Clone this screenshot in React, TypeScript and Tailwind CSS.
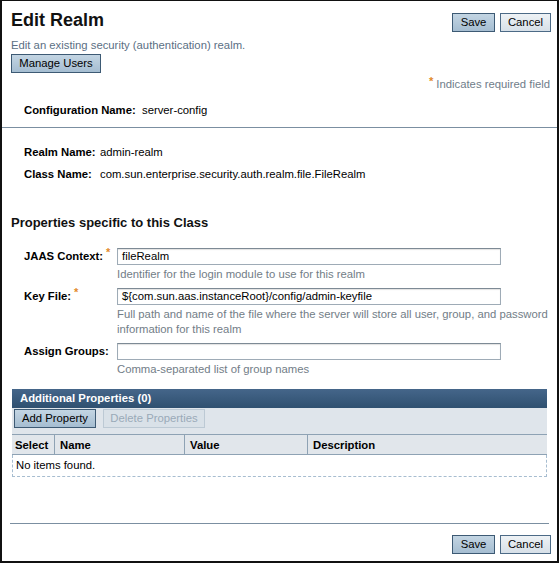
const Btn = ({
  label,
  kind = "primary",
  className = "",
}: {
  label: string;
  kind?: "primary" | "secondary" | "disabled";
  className?: string;
}) => {
  const styles =
    kind === "primary"
      ? "border-[#3d5a74] bg-gradient-to-b from-[#c3d5e3] to-[#a5bdd1] text-black"
      : kind === "secondary"
        ? "border-[#4c6a86] bg-gradient-to-b from-[#eef2f5] to-[#d7e0e8] text-black"
        : "border-[#bcc9d4] bg-[#d9e1e8] text-[#9aaab8]";
  return (
    <span
      className={`flex h-[19px] shrink-0 items-center justify-center border px-[6px] text-[11.3px] leading-none ${styles} ${className}`}
    >
      {label}
    </span>
  );
};

const Req = () => (
  <span className="relative -top-[4px] ml-[3px] text-[11px] font-bold leading-none text-[#e2892a]">
    *
  </span>
);

const Field = ({
  label,
  required,
  value,
  help,
}: {
  label: string;
  required?: boolean;
  value: string;
  help: React.ReactNode;
}) => (
  <div className="flex shrink-0 pl-[22px]">
    <div className="w-[93px] shrink-0 pt-[2px] text-[11.3px] font-bold leading-[13px] text-black">
      {label}
      {required && <Req />}
    </div>
    <div className="flex flex-col">
      <div className="h-[17px] w-[384px] border border-[#9eabb6] border-t-[#7d8a95] bg-white px-[4px] text-[11.3px] leading-[15px] text-black shadow-[inset_0_1px_1px_rgba(0,0,0,0.12)]">
        {value}
      </div>
      <div className="mt-[2px] w-[430px] whitespace-nowrap text-[11.3px] leading-[15px] text-[#727d87]">
        {help}
      </div>
    </div>
  </div>
);

const App = () => {
  return (
    <div
      className="flex h-[563px] w-[559px] flex-col overflow-hidden border-b-2 border-l-2 border-r-2 border-t border-[#111] bg-white"
      style={{ fontFamily: '"Liberation Sans", Arial, sans-serif' }}
    >
      {/* Header */}
      <div className="flex shrink-0 items-start justify-between pl-[9px] pr-[6px] pt-[8px]">
        <div>
          <h1 className="text-[18px] font-bold leading-[22px] text-[#111]">Edit Realm</h1>
          <p className="mt-[8px] text-[11.3px] leading-[13px] text-[#5b6f84]">
            Edit an existing security (authentication) realm.
          </p>
          <Btn label="Manage Users" className="mt-[2px] h-[18px] w-[90px]" />
        </div>
        <div className="mt-[4px] flex gap-[5px]">
          <Btn label="Save" className="w-[43px]" />
          <Btn label="Cancel" kind="secondary" className="w-[51px]" />
        </div>
      </div>

      <div className="mt-[5px] shrink-0 pr-[7px] text-right text-[11.3px] leading-[13px] text-[#6f7d8a]">
        <span className="relative -top-[3px] mr-[3px] font-bold text-[#e2892a]">*</span>
        Indicates required field
      </div>

      <div className="mt-[13px] flex shrink-0 pl-[22px] text-[11.3px] leading-[13px]">
        <span className="w-[118px] font-bold text-black">Configuration Name:</span>
        <span className="text-black">server-config</span>
      </div>

      <div className="mt-[10px] h-px shrink-0 bg-[#7b8fa1]" />

      <div className="mt-[18px] flex shrink-0 pl-[22px] text-[11.3px] leading-[13px]">
        <span className="w-[76px] font-bold text-black">Realm Name:</span>
        <span className="text-black">admin-realm</span>
      </div>
      <div className="mt-[9px] flex shrink-0 pl-[22px] text-[11.3px] leading-[13px]">
        <span className="w-[76px] font-bold text-black">Class Name:</span>
        <span className="text-black">com.sun.enterprise.security.auth.realm.file.FileRealm</span>
      </div>

      <h2 className="mt-[34px] shrink-0 pl-[9px] text-[13px] font-bold leading-[16px] text-[#111]">
        Properties specific to this Class
      </h2>

      <div className="mt-[17px] flex shrink-0 flex-col gap-[6px]">
        <Field
          label="JAAS Context:"
          required
          value="fileRealm"
          help="Identifier for the login module to use for this realm"
        />
        <Field
          label="Key File:"
          required
          value="${com.sun.aas.instanceRoot}/config/admin-keyfile"
          help={
            <>
              Full path and name of the file where the server will store all user, group, and password
              <br />
              information for this realm
            </>
          }
        />
        <Field label="Assign Groups:" value="" help="Comma-separated list of group names" />
      </div>

      {/* Additional properties table */}
      <div className="mx-[10px] mt-[12px] shrink-0">
        <div className="flex h-[19px] items-center bg-gradient-to-b from-[#45668a] to-[#2f5070] px-[8px] text-[11.3px] font-bold text-white">
          Additional Properties (0)
        </div>
        <div className="flex h-[26px] items-start gap-[7px] bg-[#dfe5eb] px-[2px] pt-[1px]">
          <Btn label="Add Property" className="h-[18px] w-[82px]" />
          <Btn label="Delete Properties" kind="disabled" className="h-[18px] w-[102px]" />
        </div>
        <div className="flex h-[21px] border-b border-t border-[#8ea2b4] bg-[#e1e6eb] text-[11.3px] font-bold leading-[20px] text-black">
          <div className="w-[42px] pl-[3px]">Select</div>
          <div className="w-[130px] border-l border-[#8ea2b4] pl-[5px]">Name</div>
          <div className="w-[123px] border-l border-[#8ea2b4] pl-[5px]">Value</div>
          <div className="flex-1 border-l border-[#8ea2b4] pl-[5px]">Description</div>
        </div>
        <div className="h-[22px] border-b border-l border-r border-dashed border-[#a7bdd0] pl-[3px] text-[11.3px] leading-[20px] text-black">
          No items found.
        </div>
      </div>

      <div className="mx-[8px] mt-[46px] h-px shrink-0 bg-[#7b8fa1]" />

      <div className="mt-[11px] flex shrink-0 justify-end gap-[5px] pr-[6px]">
        <Btn label="Save" className="h-[18px] w-[43px]" />
        <Btn label="Cancel" kind="secondary" className="h-[18px] w-[51px]" />
      </div>
    </div>
  );
};

export default App;
